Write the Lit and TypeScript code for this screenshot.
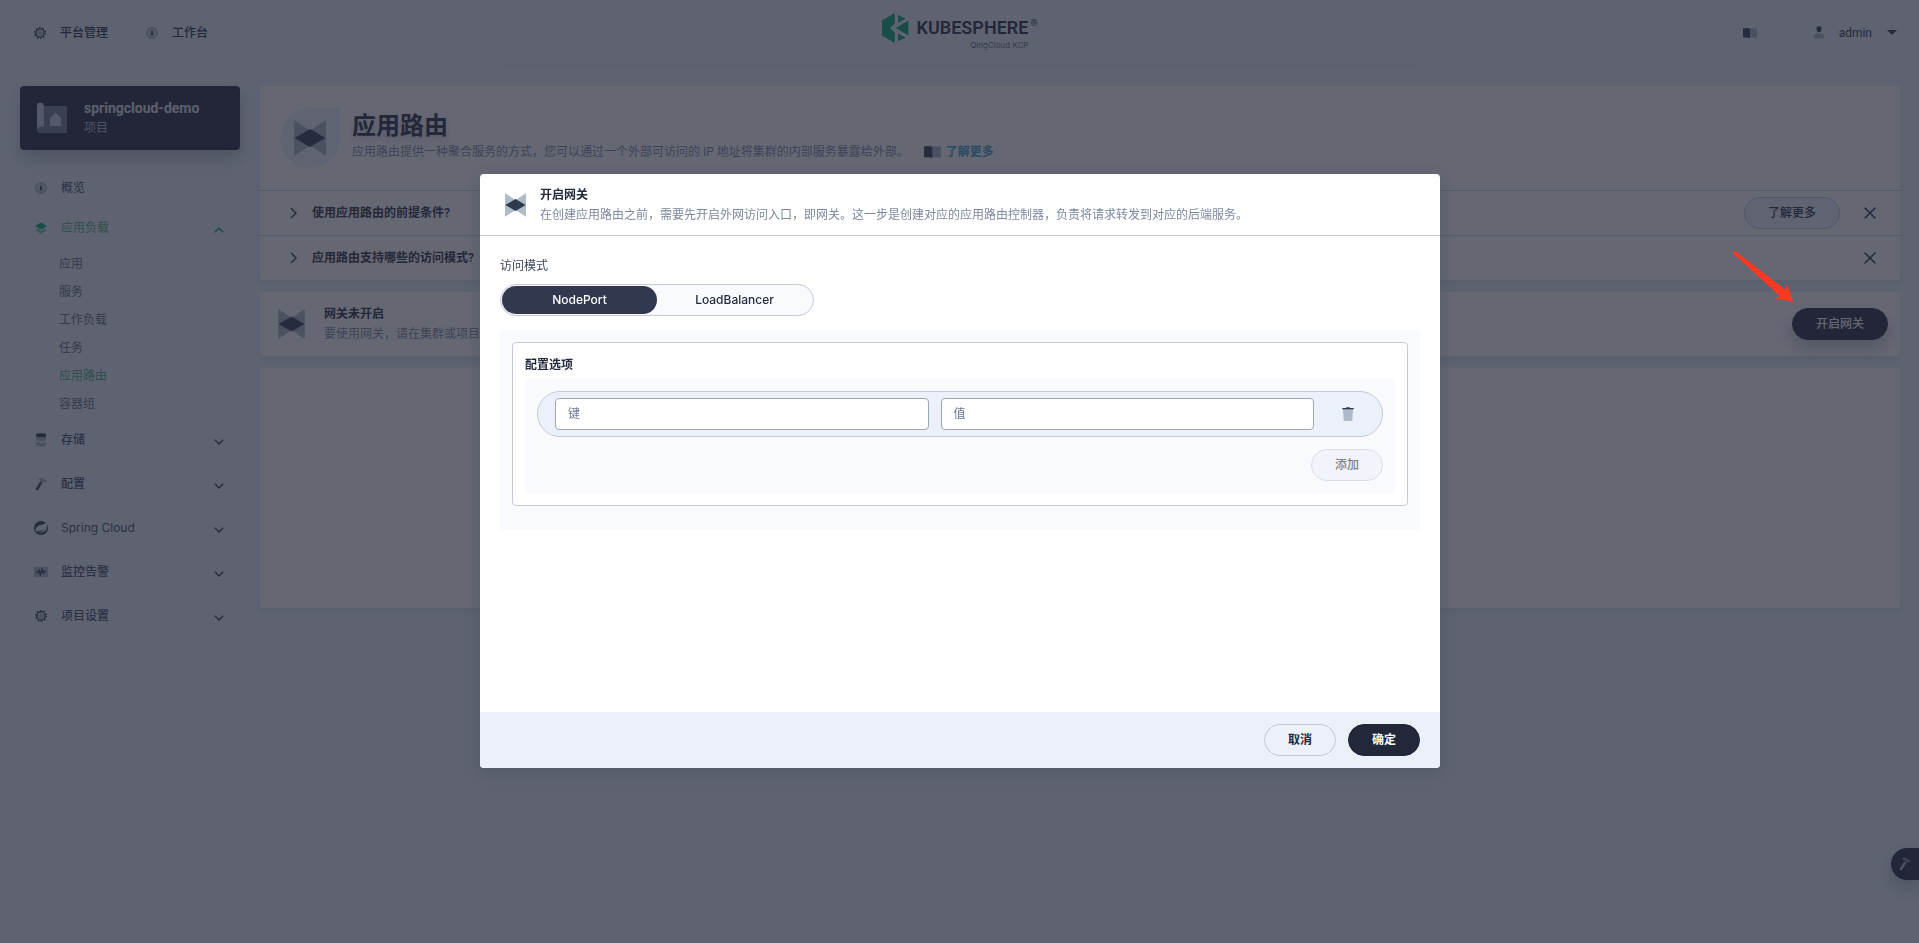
import { LitElement, html, css, svg, nothing, TemplateResult } from "lit";
import { customElement, property, state } from "lit/decorators.js";
import { classMap } from "lit/directives/class-map.js";

const glyphs: Record<string, { box: string; body: TemplateResult }> = {
  route: {
    box: "0 0 32 36",
    body: svg`<path class="light" d="M0 0L16 10.5 32 0V36L16 25.5 0 36Z"/><path class="dark" d="M.6 18L16 9 31.4 18 16 27Z"/>`,
  },
  gear: {
    box: "0 0 12 12",
    body: svg`<circle class="ring teeth" cx="6" cy="6" r="5.3"/><circle class="ring" cx="6" cy="6" r="4.1"/><circle class="light" cx="6" cy="6" r="2.6"/>`,
  },
  dashboard: {
    box: "0 0 12 12",
    body: svg`<circle class="light" cx="6" cy="6" r="6"/><circle class="lit" cx="6" cy="6" r="4.6"/><path class="dark" d="M6 2L7 6.2A1.3 1.3 0 1 1 5 6.2Z"/><path class="light" d="M1.6 8.6H10.4A5 5 0 0 1 1.6 8.6Z"/>`,
  },
  layers: {
    box: "0 0 12 12",
    body: svg`<path class="light" d="M0 8L2.6 6.6 6 8.4 9.4 6.6 12 8 6 12Z"/><path class="dark" d="M6 .6L12 4 6 7.4 0 4Z"/>`,
  },
  storage: {
    box: "0 0 12 14",
    body: svg`<path class="light" d="M1 3.2Q6 5.4 11 3.2V7.4Q6 9.2 1 7.4ZM1 8.8Q6 10.6 11 8.8V12.6Q6 15 1 12.6Z"/><path class="dark" d="M1 1.5Q1 .3 6 .3T11 1.5V3Q11 4.2 6 4.2T1 3Z"/>`,
  },
  hammer: {
    box: "0 0 12 14",
    body: svg`<path class="dark" d="M5.1 4.4L7.5 5.5 2.7 13.6.4 12.5Z"/><path class="light" d="M2.8 1.8Q5.4-.1 8.6 1.2L9.8 2.8 12 3.6 11.2 5.8 9.4 5 8 5.4 4.6 3.6Q4.6 2.4 2.8 1.8Z"/>`,
  },
  spring: {
    box: "0 0 14 14",
    body: svg`<circle class="dark" cx="7" cy="7" r="7"/><path class="cut" d="M12.4.9Q14 7.4 11 10 8 12.2 3.2 11.8 8.6 11.2 10.8 7.8 7.6 10.6 2 10.4.8 7.4 3.4 5.4 5 4.2 8.6 3.6 11 3 12.4.9Z"/>`,
  },
  monitor: {
    box: "0 0 14 10",
    body: svg`<rect class="light" width="14" height="10" rx="1"/><path class="wave" d="M2 5.4H4L5.2 3.2 6.4 7.6 8 2.2 9.2 6 10 4.4H12"/>`,
  },
  book: {
    box: "0 0 14 10",
    body: svg`<path class="light" d="M7 .4H14V9.6H7Z"/><path class="dark" d="M0 .4Q4-.4 7 .6V10Q4 9 0 9.6Z"/>`,
  },
  user: {
    box: "0 0 10 13",
    body: svg`<path class="light" d="M0 12.6V10.4Q0 7.4 3 7.4H7Q10 7.4 10 10.4V12.6Z"/><path class="dark" d="M2.4 2.6Q2.4.3 5 .3T7.6 2.6Q7.6 6.4 5 6.4T2.4 2.6Z"/>`,
  },
  trash: {
    box: "0 0 12 14",
    body: svg`<path class="light" d="M1 3H11L10.3 13Q10.2 14 9.2 14H2.8Q1.8 14 1.7 13Z"/><path class="dark" d="M.4 1H4L4.6.2H7.4L8 1H11.6V2.4H.4Z"/>`,
  },
  project: {
    box: "0 0 30 30",
    body: svg`<path class="light" d="M6 3H30V30H3.5L6 26Z"/><rect class="light" y="23" width="7" height="7" rx="3"/><path class="dark" d="M0 3.2A3.4 3.4 0 0 1 6.8 3.2V24Q3.4 22.4 0 26Z"/><path class="dark" d="M13 15L18.4 9.4 24 15V23H13Z"/>`,
  },
  down: { box: "0 0 10 6", body: svg`<path class="line" d="M.8 .8L5 5 9.2 .8"/>` },
  up: { box: "0 0 10 6", body: svg`<path class="line" d="M.8 5.2L5 1 9.2 5.2"/>` },
  right: { box: "0 0 7 12", body: svg`<path class="line" d="M1 1L6 6 1 11"/>` },
  close: { box: "0 0 12 12", body: svg`<path class="line" d="M.6.6L11.4 11.4M11.4.6L.6 11.4"/>` },
  caret: { box: "0 0 10 5", body: svg`<path class="dark" d="M0 0H10L5 5Z"/>` },
};

@customElement("ks-icon")
class KsIcon extends LitElement {
  @property() name = "";
  @property({ type: Number }) width = 12;
  @property({ type: Number }) height = 12;

  static styles = css`
    :host { display: inline-flex; flex: none; align-items: center; justify-content: center; }
    svg { display: block; overflow: visible; }
    .dark { fill: var(--icon-dark, #2c3a4b); }
    .light { fill: var(--icon-light, #aab4c2); }
    .lit { fill: var(--icon-lit, #c6cfdb); }
    .cut { fill: var(--icon-cut, #eaf2f8); }
    .ring { fill: none; stroke: var(--icon-dark, #2c3a4b); stroke-width: 1.3; }
    .teeth { stroke-width: 1.4; stroke-dasharray: 1.6 1.73; }
    .wave { fill: none; stroke: var(--icon-dark, #2c3a4b); stroke-width: 1.3; }
    .line { fill: none; stroke: var(--icon-dark, #2c3a4b); stroke-width: 1.5; }
  `;

  render() {
    const g = glyphs[this.name];
    if (!g) return nothing;
    return html`<svg width=${this.width} height=${this.height} viewBox=${g.box} aria-hidden="true">${g.body}</svg>`;
  }
}

interface MenuEntry {
  label: string;
  icon: string;
  size: [number, number];
  children?: string[];
  open?: boolean;
  leaf?: boolean;
}

const menu: MenuEntry[] = [
  { label: "概览", icon: "dashboard", size: [12, 12], leaf: true },
  {
    label: "应用负载", icon: "layers", size: [12, 12], open: true,
    children: ["应用", "服务", "工作负载", "任务", "应用路由", "容器组"],
  },
  { label: "存储", icon: "storage", size: [12, 14] },
  { label: "配置", icon: "hammer", size: [12, 14] },
  { label: "Spring Cloud", icon: "spring", size: [14, 14] },
  { label: "监控告警", icon: "monitor", size: [14, 10] },
  { label: "项目设置", icon: "gear", size: [12, 12] },
];

@customElement("app-root")
class AppRoot extends LitElement {
  @state() private mode = "NodePort";

  static styles = css`
    :host {
      display: block;
      --ink: #242a3d;
      --muted: #7c879f;
      --line: #c3c9d5;
      --tint: #ecf1f9;
      --soft: #f9fafe;
      color: var(--ink);
      font: 400 12px/20px Roboto, "Noto Sans CJK SC", sans-serif;
    }
    * { box-sizing: border-box; }
    a { color: inherit; text-decoration: none; }
    h1, h2, h3, p, ul { margin: 0; padding: 0; list-style: none; }
    button, input { font: inherit; color: inherit; }
    button { cursor: pointer; border: 0; background: none; padding: 0; }

    .page { min-height: 100vh; background: #eaf2f8; }

    .top {
      display: grid;
      grid-template-columns: 1fr auto 1fr;
      align-items: center;
      height: 66px;
      padding: 0 22px;
      border-bottom: 1px solid;
      border-image: linear-gradient(90deg, transparent 10%, #d5dce8 40%, #d5dce8 60%, transparent 90%) 1;
    }
    .nav { display: flex; gap: 38px; padding-left: 12px; font-weight: 500; }
    .nav a { display: flex; align-items: center; gap: 14px; }
    .tools { display: flex; align-items: center; justify-content: flex-end; }
    .account { display: flex; align-items: center; gap: 15px; margin-left: 57px; }

    .logo { display: flex; align-items: flex-start; gap: 8px; height: 40px; }
    .mark { display: block; fill: #00a971; }
    .word { display: grid; justify-items: end; padding-top: 3px; }
    .brand { display: flex; font: 600 18px/24px Roboto, sans-serif; color: #242a3d; }
    .reg { font: 400 9px/14px Roboto, sans-serif; padding-left: 2px; }
    .sub { font: 400 8px/10px Inter, sans-serif; padding-right: 9px; color: #5f6880; }

    .layout { display: flex; gap: 20px; padding: 20px 19px 20px 20px; align-items: flex-start; }
    .side { flex: none; width: 220px; }
    .project {
      display: flex; align-items: center; gap: 17px;
      width: 100%; height: 64px; padding: 0 17px;
      border-radius: 4px; background: #222739; color: #fff; text-align: left;
      box-shadow: 0 8px 16px rgba(36, 46, 66, .28);
      --icon-dark: #c9cedb; --icon-light: #727a8f;
    }
    .project strong { display: block; font-weight: 700; font-size: 14px; color: #e0e4ec; }
    .project span { display: block; color: #b0b7c6; }

    .menu { padding: 18px 16px 0 14px; }
    .entry {
      display: grid; grid-template-columns: 14px 1fr 10px; gap: 13px; align-items: center;
      height: 44px; color: #3e485f; font-weight: 500;
      font-family: Inter, "Noto Sans CJK SC", sans-serif;
    }
    .entry.leaf { height: 40px; font-weight: 400; }
    .entry.open { height: 40px; font-weight: 400; color: #3fae7c; --icon-dark: #00a971; --icon-light: #6fc7a3; }
    .entry.latin { font-weight: 400; }
    .chevron { padding-top: 4px; }
    .kids { display: grid; padding: 2px 0 0 25px; }
    .kids a { line-height: 28px; color: #5f6880; }
    .kids a.current { color: #3fae7c; }

    .main { flex: 1; min-width: 0; display: grid; gap: 12px; }
    .card { background: #fff; border-radius: 4px; box-shadow: 0 4px 8px rgba(36, 46, 66, .08); }
    .intro { display: flex; gap: 12px; height: 104px; padding: 22px 20px; }
    .leafmark {
      display: flex; align-items: center; justify-content: center;
      width: 60px; height: 60px; border-radius: 30px 0 30px 30px; background: #eff3fa; flex: none;
    }
    .intro h1 { font-size: 24px; line-height: 32px; font-weight: 600; margin-top: 2px; text-shadow: 0 4px 8px rgba(36, 46, 66, .2); }
    .intro p { color: var(--muted); display: flex; }
    .more { display: inline-flex; align-items: center; gap: 5px; margin-left: 15px; color: #329dce; font-weight: 700; }
    .tip {
      display: flex; align-items: center; justify-content: space-between;
      height: 45px; padding: 0 24px 0 30px; border-top: 1px solid #ccd3db;
    }
    .ask { display: flex; align-items: center; gap: 15px; font-weight: 600; }
    .acts { display: flex; align-items: center; gap: 24px; }
    .tool { display: inline-flex; align-items: center; justify-content: center; height: 32px; }
    .btn {
      display: inline-flex; align-items: center; justify-content: center;
      height: 32px; min-width: 72px; padding: 0 23px; border-radius: 16px;
      border: 1px solid var(--line); font-weight: 500;
    }
    .btn.plain { background: #eff3fa; }
    .btn.solid { background: #222739; border-color: #222739; color: #fff; }
    .btn.raised { box-shadow: 0 8px 16px rgba(36, 46, 66, .28); }
    .btn.off { opacity: .6; background: var(--tint); }
    .strong { font-weight: 600; }
    .gate { display: flex; align-items: center; height: 64px; padding: 0 12px 0 18px; gap: 19px; }
    .gate div { flex: 1; }
    .gate p { color: var(--muted); }
    .blank { height: 240px; }

    .helper {
      position: fixed; right: 0; bottom: 63px; width: 28px; height: 32px;
      border-radius: 16px 0 0 16px; background: #222739;
      display: flex; align-items: center; justify-content: center;
      --icon-dark: #aab2c4; --icon-light: #727a8f;
      box-shadow: 0 8px 16px rgba(36, 46, 66, .28);
    }

    .veil {
      position: fixed; inset: 0; padding: 0 0 1px 1px;
      display: flex; align-items: center; justify-content: center;
      background: rgba(35, 39, 56, .7);
    }
    .dialog {
      display: flex; flex-direction: column; width: 960px; max-width: 100%;
      background: #fff; border-radius: 4px; overflow: hidden;
      box-shadow: 0 4px 16px rgba(36, 46, 66, .2);
      --icon-light: #aebac7;
    }
    .head { display: flex; align-items: center; gap: 14px; padding: 10px 25px; border-bottom: 1px solid var(--line); height: 62px; }
    .head h2 { font-size: 12px; line-height: 20px; font-weight: 600; }
    .head p { color: var(--muted); }
    .body { padding: 20px; min-height: 476px; }
    .label { color: #3b445c; }
    .switch {
      display: flex; width: 314px; height: 32px; margin: 8px 0 14px; padding: 1px;
      border: 1px solid var(--line); border-radius: 16px; background: var(--soft);
    }
    .switch label {
      flex: 1; display: flex; align-items: center; justify-content: center;
      border-radius: 14px; font-weight: 500; cursor: pointer; font-family: Inter, sans-serif;
    }
    .switch label.on { background: #323850; color: #fff; }
    .switch input { appearance: none; width: 0; height: 0; margin: 0; }
    .panel { padding: 12px 12px 24px; border-radius: 4px; background: var(--soft); }
    .box { padding: 12px; border: 1px solid var(--line); border-radius: 4px; background: #fff; }
    .box h3 { font-size: 12px; line-height: 20px; font-weight: 600; margin-bottom: 4px; }
    .pairs { padding: 12px; background: var(--soft); display: grid; gap: 12px; justify-items: end; }
    .pair {
      display: grid; grid-template-columns: 1fr 1fr 44px; gap: 12px; align-items: center;
      width: 100%; height: 46px; padding: 0 12px 0 17px;
      border: 1px solid var(--line); border-radius: 23px; background: var(--tint);
    }
    .pair input {
      width: 100%; min-width: 0; height: 32px; padding: 0 12px; border: 1px solid #9aa5b5; border-radius: 4px;
      background: #fff; outline: 0;
    }
    .pair input::placeholder { color: #6d7891; opacity: 1; }
    .foot { display: flex; justify-content: flex-end; gap: 12px; padding: 12px 20px; background: var(--tint); }
    .foot .btn { font-weight: 600; }

    .arrow { position: fixed; top: 250px; right: 125px; fill: #ff3820; }
  `;

  private entry(e: MenuEntry) {
    const cls = classMap({ entry: true, leaf: !!e.leaf, open: !!e.open, latin: /^[A-Z]/.test(e.label) });
    return html`
      <li>
        <a class=${cls} href="#">
          <ks-icon name=${e.icon} .width=${e.size[0]} .height=${e.size[1]}></ks-icon>
          <span>${e.label}</span>
          ${e.leaf ? nothing : html`<ks-icon class="chevron" name=${e.open ? "up" : "down"} .width=${10} .height=${6}></ks-icon>`}
        </a>
        ${e.children
          ? html`<div class="kids">
              ${e.children.map((c) => html`<a href="#" class=${classMap({ current: c === "应用路由" })}>${c}</a>`)}
            </div>`
          : nothing}
      </li>
    `;
  }

  private tip(text: string, more: boolean) {
    return html`
      <div class="tip">
        <button class="ask"><ks-icon name="right" .width=${7} .height=${12}></ks-icon>${text}</button>
        <div class="acts">
          ${more ? html`<button class="btn plain">了解更多</button>` : nothing}
          <button class="tool" aria-label="关闭"><ks-icon name="close"></ks-icon></button>
        </div>
      </div>
    `;
  }

  private modeOption(name: string) {
    return html`
      <label class=${classMap({ on: this.mode === name })}>
        <input type="radio" name="mode" .checked=${this.mode === name} @change=${() => (this.mode = name)} />${name}
      </label>
    `;
  }

  render() {
    return html`
      <div class="page">
        <header class="top">
          <nav class="nav">
            <a href="#"><ks-icon name="gear"></ks-icon>平台管理</a>
            <a href="#"><ks-icon name="dashboard"></ks-icon>工作台</a>
          </nav>
          <a class="logo" href="#">
            <svg class="mark" width="27" height="30" viewBox="0 0 27 30" aria-hidden="true">
              <path d="M0 7.4L12.8 0V11L8 15 12.8 19.4V30L0 22.6ZM16 1.6L23.6 6 16 9.8ZM26.4 7.6V22.6L13.8 15ZM16 20.6L23.6 24.6 16 28.6Z" />
            </svg>
            <span class="word">
              <span class="brand">KUBESPHERE<span class="reg">®</span></span>
              <span class="sub">QingCloud KCP</span>
            </span>
          </a>
          <div class="tools">
            <button class="tool" aria-label="文档"><ks-icon name="book" .width=${14} .height=${10}></ks-icon></button>
            <button class="account">
              <ks-icon name="user" .width=${10} .height=${13}></ks-icon>admin
              <ks-icon name="caret" .width=${10} .height=${5}></ks-icon>
            </button>
          </div>
        </header>

        <div class="layout">
          <aside class="side">
            <button class="project">
              <ks-icon name="project" .width=${30} .height=${30}></ks-icon>
              <span><strong>springcloud-demo</strong><span>项目</span></span>
            </button>
            <ul class="menu">${menu.map((e) => this.entry(e))}</ul>
          </aside>

          <main class="main">
            <section class="card">
              <div class="intro">
                <span class="leafmark"><ks-icon name="route" .width=${32} .height=${36}></ks-icon></span>
                <div>
                  <h1>应用路由</h1>
                  <p>
                    应用路由提供一种聚合服务的方式，您可以通过一个外部可访问的 IP 地址将集群的内部服务暴露给外部。
                    <a class="more" href="#"><ks-icon name="book" .width=${17} .height=${12}></ks-icon>了解更多</a>
                  </p>
                </div>
              </div>
              ${this.tip("使用应用路由的前提条件?", true)} ${this.tip("应用路由支持哪些的访问模式?", false)}
            </section>
            <section class="card gate">
              <ks-icon name="route" .width=${27} .height=${30}></ks-icon>
              <div>
                <span class="strong">网关未开启</span>
                <p>要使用网关，请在集群或项目中开启网关。</p>
              </div>
              <button class="btn solid raised">开启网关</button>
            </section>
            <section class="card blank"></section>
          </main>
        </div>
        <button class="helper" aria-label="工具箱"><ks-icon name="hammer" .width=${12} .height=${14}></ks-icon></button>
      </div>

      <div class="veil">
        <form class="dialog" role="dialog" aria-label="开启网关" @submit=${(e: Event) => e.preventDefault()}>
          <div class="head">
            <ks-icon name="route" .width=${21} .height=${24}></ks-icon>
            <div>
              <h2>开启网关</h2>
              <p>在创建应用路由之前，需要先开启外网访问入口，即网关。这一步是创建对应的应用路由控制器，负责将请求转发到对应的后端服务。</p>
            </div>
          </div>
          <div class="body">
            <div class="label" id="mode-label">访问模式</div>
            <div class="switch" role="radiogroup" aria-labelledby="mode-label">
              ${this.modeOption("NodePort")} ${this.modeOption("LoadBalancer")}
            </div>
            <div class="panel">
              <div class="box">
                <h3>配置选项</h3>
                <div class="pairs">
                  <div class="pair">
                    <input type="text" placeholder="键" aria-label="键" />
                    <input type="text" placeholder="值" aria-label="值" />
                    <button type="button" class="tool" aria-label="删除"><ks-icon name="trash" .width=${12} .height=${14}></ks-icon></button>
                  </div>
                  <button type="button" class="btn off">添加</button>
                </div>
              </div>
            </div>
          </div>
          <div class="foot">
            <button type="button" class="btn">取消</button>
            <button type="submit" class="btn solid">确定</button>
          </div>
        </form>
      </div>

      <svg class="arrow" width="61" height="53" viewBox="0 0 61 53" aria-hidden="true">
        <path d="M.4 3.6Q-.2 .6 3 1.6L52.3 39.7 54 34.3 60.4 51.7 42.3 48.7 47 46Z" />
      </svg>
    `;
  }
}
